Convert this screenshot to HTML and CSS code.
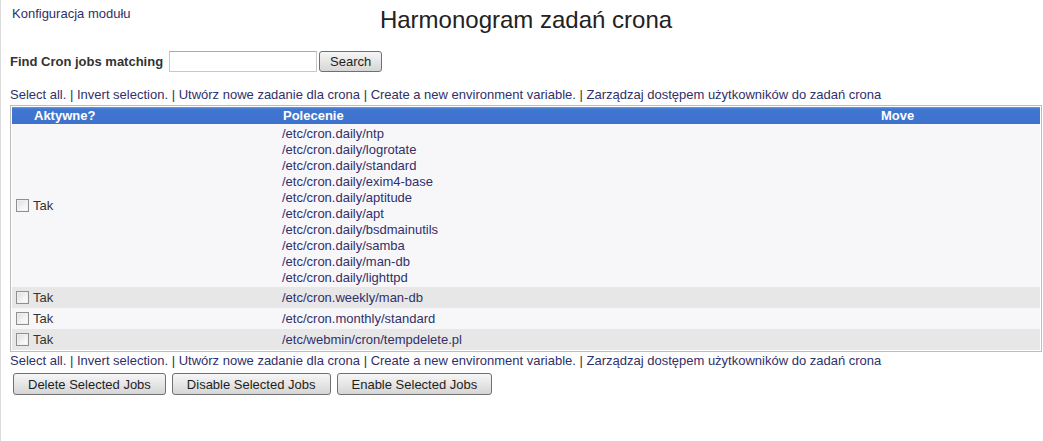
FILE: index.html
```html
<!DOCTYPE html>
<html lang="pl">
  <head>
    <meta charset="UTF-8" />
    <title>Harmonogram zadań crona</title>
    <link rel="stylesheet" href="styles.css">
  </head>
  <body>
    <div class="header">
      <a class="config" href="#">Konfiguracja modułu</a>
      <h1>Harmonogram zadań crona</h1>
      <span></span>
    </div>

    <form class="search">
      <label for="find">Find Cron jobs matching</label>
      <input type="text" id="find" />
      <button type="button">Search</button>
    </form>

    <div class="links">
      <a href="#">Select all.</a> | <a href="#">Invert selection.</a> |
      <a href="#">Utwórz nowe zadanie dla crona</a> |
      <a href="#">Create a new environment variable.</a> |
      <a href="#">Zarządzaj dostępem użytkowników do zadań crona</a>
    </div>

    <div class="grid">
      <table class="jobs">
        <colgroup>
          <col class="c-box" />
          <col class="c-active" />
          <col class="c-cmd" />
          <col />
        </colgroup>
        <thead>
          <tr>
            <th></th>
            <th>Aktywne?</th>
            <th>Polecenie</th>
            <th>Move</th>
          </tr>
        </thead>
        <tbody>
          <tr>
            <td><input type="checkbox" /></td>
            <td>Tak</td>
            <td>
              <a href="#">/etc/cron.daily/ntp</a><br />
              <a href="#">/etc/cron.daily/logrotate</a><br />
              <a href="#">/etc/cron.daily/standard</a><br />
              <a href="#">/etc/cron.daily/exim4-base</a><br />
              <a href="#">/etc/cron.daily/aptitude</a><br />
              <a href="#">/etc/cron.daily/apt</a><br />
              <a href="#">/etc/cron.daily/bsdmainutils</a><br />
              <a href="#">/etc/cron.daily/samba</a><br />
              <a href="#">/etc/cron.daily/man-db</a><br />
              <a href="#">/etc/cron.daily/lighttpd</a>
            </td>
            <td></td>
          </tr>
          <tr>
            <td><input type="checkbox" /></td>
            <td>Tak</td>
            <td><a href="#">/etc/cron.weekly/man-db</a></td>
            <td></td>
          </tr>
          <tr>
            <td><input type="checkbox" /></td>
            <td>Tak</td>
            <td><a href="#">/etc/cron.monthly/standard</a></td>
            <td></td>
          </tr>
          <tr>
            <td><input type="checkbox" /></td>
            <td>Tak</td>
            <td><a href="#">/etc/webmin/cron/tempdelete.pl</a></td>
            <td></td>
          </tr>
        </tbody>
      </table>
    </div>

    <div class="links bottom">
      <a href="#">Select all.</a> | <a href="#">Invert selection.</a> |
      <a href="#">Utwórz nowe zadanie dla crona</a> |
      <a href="#">Create a new environment variable.</a> |
      <a href="#">Zarządzaj dostępem użytkowników do zadań crona</a>
    </div>

    <div class="actions">
      <button type="button">Delete Selected Jobs</button>
      <button type="button">Disable Selected Jobs</button>
      <button type="button">Enable Selected Jobs</button>
    </div>
  </body>
</html>
```

FILE: styles.css
```css
html {
  background-color: #fff;
}

body {
  margin: 0;
  padding: 0 1px 0 9px;
  min-height: 441px;
  box-sizing: border-box;
  border-left: 1px solid #dcdcdc;
  font-family: "Liberation Sans", Arial, sans-serif;
  font-size: 13px;
  color: #333;
}

a {
  color: #30306a;
  text-decoration: none;
}

.header {
  display: grid;
  grid-template-columns: 1fr auto 1fr;
  align-items: start;
  height: 44px;
}

.header .config {
  font-size: 13px;
  margin: 6px 0 0 2px;
}

.header h1 {
  margin: 6px 0 0;
  font-size: 24px;
  font-weight: normal;
  color: #222;
}

.search {
  display: flex;
  align-items: center;
  height: 34px;
}

.search label {
  font-weight: bold;
  margin-right: 6px;
}

.search input {
  width: 148px;
  height: 21px;
  box-sizing: border-box;
  border: 1px solid #c8c8c8;
  border-top-color: #ababab;
  margin: 0 2px 0 0;
  padding: 1px 3px;
  font: inherit;
}

button {
  font-family: "Liberation Sans", Arial, sans-serif;
  font-size: 13px;
  color: #1e1e1e;
  height: 21px;
  padding: 0 10px;
  border: 1px solid #707070;
  border-radius: 3px;
  background: linear-gradient(to bottom, #f6f6f6 0%, #e6e6e6 50%, #d6d6d6 100%);
}

.links {
  line-height: 16px;
  margin-top: 9px;
  white-space: nowrap;
}

.links.bottom {
  margin-top: 1px;
}

.grid {
  border: 1px solid #bcbcbc;
  padding: 1px;
  margin-top: 2px;
}

.jobs {
  width: 100%;
  border-collapse: collapse;
  table-layout: fixed;
  line-height: 16px;
}

.c-box {
  width: 19px;
}

.c-active {
  width: 249px;
}

.c-cmd {
  width: 598px;
}

.jobs th {
  background: linear-gradient(to bottom, #6a98e0 0%, #4077d1 12%, #3d72cc 100%);
  color: #fff;
  font-weight: bold;
  text-align: left;
  padding: 0 3px;
  height: 17px;
}

.jobs td {
  padding: 2px 2px 1px;
  vertical-align: middle;
}

.jobs td:first-child {
  padding: 0 0 0 1px;
}

.jobs tbody tr:nth-child(odd) {
  background-color: #f7f7f9;
}

.jobs tbody tr:nth-child(even) {
  background-color: #e7e7e7;
}

.jobs input[type="checkbox"] {
  appearance: none;
  width: 13px;
  height: 13px;
  margin: 4px 2px 4px 3px;
  display: block;
  box-sizing: border-box;
  border: 1px solid #8e8f8f;
  background: linear-gradient(135deg, #dcdcdc 0%, #f4f4f4 60%, #fff 100%);
  box-shadow: inset 0 0 0 1px #f0f0f0;
}

.actions {
  display: flex;
  gap: 6px;
  margin: 4px 0 0 3px;
}

.actions button {
  height: 22px;
  padding: 0 14px;
}
```
